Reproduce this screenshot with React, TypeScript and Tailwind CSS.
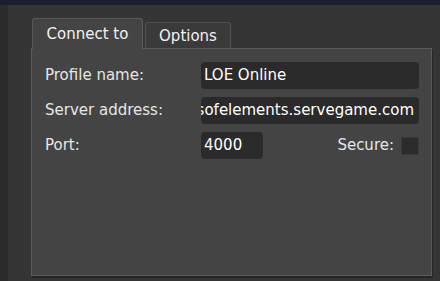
export default function App() {
  const font = { fontFamily: '"DejaVu Sans", Verdana, sans-serif' }

  return (
    <div className="w-[440px] h-[281px] flex flex-col bg-[#353535] text-[15px] overflow-hidden" style={font}>
      <div className="h-[5px] shrink-0 bg-[#1b1f2e]" />
      <div className="flex flex-1 min-h-0">
        <div className="w-[8px] shrink-0 bg-[#2b2b2b]" />
        <div className="flex-1 pl-[23px] pt-[13px] pr-[6px]">
          {/* Tabs */}
          <div className="flex items-end h-[30px] relative z-10 pl-[1px]">
            <div className="h-[31px] w-[111px] -mb-[1px] bg-[#444444] border border-b-0 border-[#5a5a5a] rounded-t-[3px] flex items-center justify-center text-[#f2f2f2] pt-[1px]">
              Connect to
            </div>
            <div className="h-[26px] w-[86px] ml-[2px] bg-[#3a3a3a] border border-b-0 border-[#505050] rounded-t-[3px] flex items-center justify-center text-[#f2f2f2] pt-[1px]">
              Options
            </div>
          </div>

          {/* Panel */}
          <div className="w-[401px] h-[228px] bg-[#444444] border border-[#5a5a5a] shadow-[1px_2px_0_#262626] pl-[13px] pr-[12px] pt-[13px] flex flex-col gap-[8px] text-[#e6e6e6]">
            <div className="flex items-center">
              <div className="w-[156px]">Profile name:</div>
              <div className="flex-1 h-[27px] rounded-[4px] bg-[#2a2a2a] flex items-center px-[3px] text-white">
                LOE Online
              </div>
            </div>
            <div className="flex items-center">
              <div className="w-[156px]">Server address:</div>
              <div className="flex-1 h-[27px] rounded-[4px] bg-[#2a2a2a] flex items-center justify-end pr-[5px] text-white overflow-hidden whitespace-nowrap">
                sofelements.servegame.com
              </div>
            </div>
            <div className="flex items-center">
              <div className="w-[156px]">Port:</div>
              <div className="w-[62px] h-[27px] rounded-[4px] bg-[#2a2a2a] flex items-center px-[3px] text-white">
                4000
              </div>
              <div className="flex-1 flex items-center justify-end gap-[7px]">
                <span>Secure:</span>
                <div className="w-[18px] h-[18px] bg-[#2c2c2c] border border-[#3a3a3a] rounded-[1px]" />
              </div>
            </div>
          </div>
        </div>
      </div>
    </div>
  )
}
